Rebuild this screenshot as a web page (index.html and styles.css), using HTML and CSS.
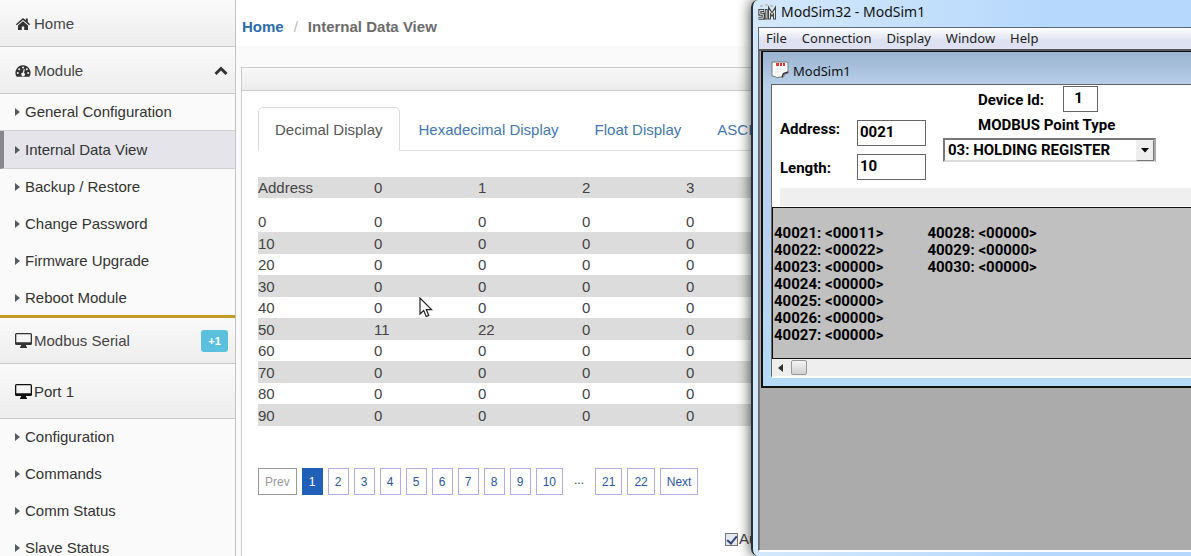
FILE: index.html
```html
<!DOCTYPE html>
<html lang="en">
<head>
<meta charset="utf-8">
<title>Internal Data View</title>
<link rel="stylesheet" href="styles.css">
</head>
<body>
<div class="page">
  <nav class="sidebar">
    <a class="section" href="#">
      <svg class="icon" width="16" height="14" viewBox="0 0 16 14"><path d="M8 1 0.8 7.2l1 1.1L8 3.100l6.200 5.200 1-1.100-2.400-2.100V1.500h-2v1.800z" fill="#333"/><path d="M8 4.200 3 8.400V13h3.800V9.500h2.400V13H13V8.400z" fill="#333"/></svg>
      <span>Home</span>
    </a>
    <a class="section" href="#">
      <svg class="icon" width="16" height="14" viewBox="0 0 16 14"><path d="M8 1.200a7.600 7.600 0 0 0-6.400 11.600h12.800A7.600 7.600 0 0 0 8 1.200z" fill="#333"/><g fill="#f5f5f5"><circle cx="2.800" cy="9" r="1"/><circle cx="4.200" cy="5.200" r="1"/><circle cx="8" cy="3.500" r="1"/><circle cx="11.800" cy="5.200" r="1"/><circle cx="13.200" cy="9" r="1"/><path d="m8.800 5 1 .3-.8 3.600a1.800 1.800 0 1 1-1.200-.2z"/></g></svg>
      <span>Module</span>
      <svg class="chevron" width="14" height="10" viewBox="0 0 14 10"><path d="m1.500 8 5.500-5.500L12.500 8" fill="none" stroke="#333" stroke-width="3"/></svg>
    </a>
    <ul class="links">
      <li class="boxed"><a href="#">General Configuration</a></li>
      <li class="boxed active"><a href="#">Internal Data View</a></li>
      <li><a href="#">Backup / Restore</a></li>
      <li><a href="#">Change Password</a></li>
      <li><a href="#">Firmware Upgrade</a></li>
      <li><a href="#">Reboot Module</a></li>
    </ul>
    <a class="section gold" href="#">
      <svg class="icon" width="17" height="15" viewBox="0 0 17 15"><path d="M1.500 0h14A1.500 1.500 0 0 1 17 1.500v9a1.500 1.500 0 0 1-1.500 1.500H11v1.500h1V15H5v-1.500h1V12H1.500A1.500 1.500 0 0 1 0 10.500v-9A1.500 1.500 0 0 1 1.500 0zM1.300 1.300v7.900h14.400V1.300z" fill="#333" fill-rule="evenodd"/></svg>
      <span>Modbus Serial</span>
      <span class="badge">+1</span>
    </a>
    <a class="section tall" href="#">
      <svg class="icon" width="17" height="15" viewBox="0 0 17 15"><path d="M1.500 0h14A1.500 1.500 0 0 1 17 1.500v9a1.500 1.500 0 0 1-1.500 1.500H11v1.500h1V15H5v-1.500h1V12H1.500A1.500 1.500 0 0 1 0 10.500v-9A1.500 1.500 0 0 1 1.500 0zM1.300 1.300v7.900h14.400V1.300z" fill="#111" fill-rule="evenodd"/></svg>
      <span>Port 1</span>
    </a>
    <ul class="links">
      <li><a href="#">Configuration</a></li>
      <li><a href="#">Commands</a></li>
      <li><a href="#">Comm Status</a></li>
      <li><a href="#">Slave Status</a></li>
    </ul>
  </nav>

  <main class="main">
    <div class="breadcrumb"><a href="#">Home</a><span class="slash">/</span><span>Internal Data View</span></div>
    <section class="panel">
      <div class="panel-head"></div>
      <div class="panel-body">
        <div class="tabs">
          <a class="tab current" href="#">Decimal Display</a>
          <a class="tab" href="#">Hexadecimal Display</a>
          <a class="tab" href="#">Float Display</a>
          <a class="tab" href="#">ASCII</a>
        </div>
        <table class="data">
          <thead><tr><th class="address">Address</th><th>0</th><th>1</th><th>2</th><th>3</th><th class="rest"></th></tr></thead>
          <tbody>
            <tr><td>0</td><td>0</td><td>0</td><td>0</td><td>0</td><td></td></tr>
            <tr><td>10</td><td>0</td><td>0</td><td>0</td><td>0</td><td></td></tr>
            <tr><td>20</td><td>0</td><td>0</td><td>0</td><td>0</td><td></td></tr>
            <tr><td>30</td><td>0</td><td>0</td><td>0</td><td>0</td><td></td></tr>
            <tr><td>40</td><td>0</td><td>0</td><td>0</td><td>0</td><td></td></tr>
            <tr><td>50</td><td>11</td><td>22</td><td>0</td><td>0</td><td></td></tr>
            <tr><td>60</td><td>0</td><td>0</td><td>0</td><td>0</td><td></td></tr>
            <tr><td>70</td><td>0</td><td>0</td><td>0</td><td>0</td><td></td></tr>
            <tr><td>80</td><td>0</td><td>0</td><td>0</td><td>0</td><td></td></tr>
            <tr><td>90</td><td>0</td><td>0</td><td>0</td><td>0</td><td></td></tr>
          </tbody>
        </table>
        <div class="pager">
          <button class="prev" disabled>Prev</button>
          <button class="on">1</button>
          <button>2</button>
          <button>3</button>
          <button>4</button>
          <button>5</button>
          <button>6</button>
          <button>7</button>
          <button>8</button>
          <button>9</button>
          <button>10</button>
          <span class="dots">...</span>
          <button>21</button>
          <button>22</button>
          <button>Next</button>
        </div>
        <div class="refresh">
          <input type="checkbox" id="auto" checked><label for="auto">Auto</label>
        </div>
      </div>
    </section>
  </main>
</div>

<svg class="pointer" width="14" height="21" viewBox="0 0 14 21"><path d="M1 1v16l3.700-3.500 2.500 6 2.600-1.100-2.500-5.800H12.500z" fill="#fff" stroke="#222" stroke-width="1.200"/></svg>

<div class="window">
  <div class="titlebar">
    <svg width="18" height="18" viewBox="0 0 18 18"><path d="M2 3h3M7 2h3M12 3h3" stroke="#c4b4b4" stroke-width="1.500"/><g fill="none" stroke="#444" stroke-width="3"><path d="M6 7.500H1.800v3.700h3.400v4H.5M8.200 6v10.500M11.500 16.500v-9l2.500 4 2.500-4v9"/></g><g fill="none" stroke="#e4e4e4" stroke-width="1"><path d="M5.500 7.500H1.800v3.700h3.400v4H1M8.200 7v8.500M11.500 15.500v-8l2.500 4 2.500-4v8"/></g></svg>
    <span>ModSim32 - ModSim1</span>
  </div>
  <div class="client">
    <div class="menubar">
      <button>File</button><button>Connection</button><button>Display</button><button>Window</button><button>Help</button>
    </div>
    <div class="workspace">
      <div class="child">
        <div class="child-title">
          <svg width="18" height="18" viewBox="0 0 18 18"><path d="M1 1h16v11l-3 1-2 3.500-3-.5-3 1-2-1.500L1 15z" fill="#fff" stroke="#777"/><path d="m17 11-4.500 1.500L11 16" fill="none" stroke="#333" stroke-width="1.500"/><path d="M5 3.500h3M9 3.500h2M12 3.500h2" stroke="#e33" stroke-width="3"/><path d="M4 8h9M4 11h6" stroke="#ddd"/></svg>
          <span>ModSim1</span>
        </div>
        <div class="child-body">
          <div class="form">
            <div class="range">
              <label for="addr">Address:</label><input id="addr" type="text" value="0021">
              <label for="len">Length:</label><input id="len" type="text" value="10">
            </div>
            <div class="point">
              <div class="device"><label for="dev">Device Id:</label><input id="dev" type="text" value="1"></div>
              <label class="point-label" for="type">MODBUS Point Type</label>
              <div class="combo">
                <select id="type"><option>03: HOLDING REGISTER</option></select>
                <span class="drop"><svg width="8" height="5" viewBox="0 0 8 5"><path d="M0 0h8L4 4.500z" fill="#000"/></svg></span>
              </div>
            </div>
          </div>
          <div class="strip"></div>
          <div class="registers">
            <div class="column">
              <span>40021: &lt;00011&gt;</span>
              <span>40022: &lt;00022&gt;</span>
              <span>40023: &lt;00000&gt;</span>
              <span>40024: &lt;00000&gt;</span>
              <span>40025: &lt;00000&gt;</span>
              <span>40026: &lt;00000&gt;</span>
              <span>40027: &lt;00000&gt;</span>
            </div>
            <div class="column">
              <span>40028: &lt;00000&gt;</span>
              <span>40029: &lt;00000&gt;</span>
              <span>40030: &lt;00000&gt;</span>
            </div>
          </div>
          <div class="scroll">
            <svg width="5" height="8" viewBox="0 0 5 8"><path d="M5 0v8L0 4z" fill="#333"/></svg>
            <span class="thumb"></span>
          </div>
        </div>
      </div>
    </div>
  </div>
</div>
</body>
</html>
```
FILE: styles.css
```css
* { box-sizing: border-box; }

body {
  margin: 0;
  height: 100vh;
  overflow: hidden;
  position: relative;
  font: 15px/20px "Liberation Sans", Arial, sans-serif;
  color: #444;
  background: #fafafa;
}

a { text-decoration: none; color: inherit; }

.page { display: flex; height: 100vh; overflow: hidden; }

/* Sidebar */
.sidebar {
  flex: none;
  width: 236px;
  border-right: 1px solid #c4c4c8;
  background: #fafafa;
  overflow: hidden;
}

.section {
  display: flex;
  align-items: center;
  gap: 3px;
  height: 47px;
  padding: 1px 7px 0 15px;
  border-bottom: 1px solid #c8c8c8;
  background: linear-gradient(#fafafa, #ededee);
}
.section .icon { flex: none; width: 16px; }
.section.gold { height: 49px; padding-top: 0; border-top: 3px solid #c49a27; }
.section.gold .icon, .section.tall .icon { width: 17px; }
.section.gold, .section.tall { gap: 2px; }
.section.tall { height: 55px; color: #333; }
.chevron { margin-left: auto; }

.badge {
  margin-left: auto;
  width: 27px;
  border-radius: 3px;
  background: #5bc0de;
  color: #fff;
  font-size: 11px;
  font-weight: bold;
  line-height: 22px;
  text-align: center;
}

.links { display: flex; flex-direction: column; margin: 0; padding: 0; list-style: none; color: #333; }
.links li { height: 37px; }
.links li:last-child { height: 35px; }
.links .boxed { border-bottom: 1px solid #d0d0d4; }
.links .active { height: 38px; background: #e4e4ea; border-left: 4px solid #88888c; }
.links a { display: flex; align-items: center; gap: 5px; height: 36px; padding-left: 15px; }
.links .active a { height: 37px; padding-left: 11px; }
.links a::before {
  content: "";
  border: 4px solid transparent;
  border-left: 5px solid #555c60;
  border-right: 0;
}

/* Content */
.main { flex: 1; min-width: 0; display: flex; flex-direction: column; }

.breadcrumb {
  flex: none;
  display: flex;
  gap: 10px;
  height: 46px;
  margin-bottom: 21px;
  padding: 17px 6px 0;
  background: #fff;
  font-weight: bold;
  color: #6c6c6c;
}
.breadcrumb a { color: #2b6cb0; }
.slash { color: #bbb; font-weight: normal; }

.panel {
  flex: 1;
  margin-left: 5px;
  border: 1px solid #ccc;
  background: #fff;
}
.panel-head { height: 23px; border-bottom: 1px solid #ccc; background: linear-gradient(#f8f8f8, #ececec); }
.panel-body { padding: 16px; }

.tabs { display: flex; gap: 2px; height: 44px; border-bottom: 1px solid #ddd; white-space: nowrap; }
.tab { height: 44px; padding: 12px 16px; border: 1px solid transparent; color: #3f78b4; }
.tab.current { border-color: #ddd; border-bottom-color: #fff; border-radius: 5px 5px 0 0; background: #fff; color: #555; }

.data { width: 100%; margin-top: 26px; border-collapse: collapse; table-layout: fixed; }
.data th, .data td { height: 21px; padding: 0; line-height: 21px; font-weight: normal; text-align: left; }
.data th { width: 104px; background: #dcdcdc; }
.data .address { width: 116px; }
.data .rest { width: auto; }
.data tbody::before { content: ""; display: block; height: 13px; }
.data tbody tr:nth-child(even) td { height: 22px; background: #dcdcdc; }

.pager { display: flex; gap: 5px; margin-top: 42px; font-size: 12px; }
.pager button {
  min-width: 21px;
  height: 27px;
  padding: 0 6px;
  border: 1px solid #b4aaf0;
  background: #fff;
  color: #2a58a0;
  font: inherit;
}
.pager .prev { border-color: #999; color: #999; }
.pager .on { border-color: #2060b8; background: #2060b8; color: #fff; }
.dots { width: 22px; line-height: 24px; text-align: center; }

.refresh { display: flex; align-items: center; margin: 34px 0 0 467px; white-space: nowrap; }
.refresh input {
  appearance: none;
  width: 13px;
  height: 13px;
  margin: 0 1px 0 0;
  border: 1px solid #777;
  background: #e4e8f0;
}
.refresh input:checked::before {
  content: "";
  display: block;
  width: 4px;
  height: 8px;
  margin: 0 auto;
  border: solid #34497c;
  border-width: 0 2px 2px 0;
  transform: rotate(40deg);
}

.pointer { position: absolute; left: 419px; top: 297px; }

/* Overlapping simulator window */
.window {
  position: absolute;
  inset: 0 0 0 751px;
  display: flex;
  flex-direction: column;
  padding: 0 0 4px 5px;
  border-left: 2px solid #29323c;
  border-radius: 7px 0 0 7px;
  background: linear-gradient(90deg, #d4e8fb, #b6d8fc 300px);
  box-shadow: 0 0 14px rgba(0, 0, 0, .75);
  color: #111;
  font: 13px/20px "Noto Sans", "Open Sans", sans-serif;
}
.titlebar {
  display: flex;
  gap: 5px;
  height: 27px;
  padding-top: 3px;
  font-size: 14px;
  line-height: 18px;
}
.client {
  flex: 1;
  display: flex;
  flex-direction: column;
  border: 1px solid #5d6874;
  border-width: 1px 0 0 1px;
  border-bottom: 2px solid #fff;
}
.menubar {
  display: flex;
  gap: 15px;
  height: 23px;
  padding: 0 0 2px 7px;
  border-bottom: 2px solid #55585e;
  background: linear-gradient(#fff, #dde1f0 60%, #dfe0f2);
}
.menubar button { padding: 0; border: 0; background: none; color: #222; font: inherit; }
.workspace { flex: 1; padding-left: 1px; border-left: 1px solid #777; background: #ababab; }

.child {
  padding: 0 0 8px 8px;
  border: solid #111;
  border-width: 1px 0 2px 2px;
  background: linear-gradient(#9ab3d0, #b9d0ea 34px, #b9d1ee 60%, #b4dcf4);
}
.child-title { display: flex; gap: 4px; height: 32px; padding: 9px 0 0; line-height: 20px; }
.child-body {
  border-left: 1px solid #666;
  border-top: 1px solid #666;
  border-bottom: 2px solid #fff;
  background: #fff;
  font: bold 15px/18px Roboto, "Liberation Sans", sans-serif;
  color: #000;
}
.form { display: flex; gap: 17px; height: 103px; padding-left: 8px; }
.range { display: grid; grid-template-columns: 77px 69px; row-gap: 8px; align-content: start; padding-top: 35px; }
.range label + input + label { padding-top: 5px; }
.child-body input {
  width: 100%;
  height: 26px;
  padding: 0 2px 3px;
  border: 1px solid #666;
  background: #fff;
  color: inherit;
  font: inherit;
}
.device { display: flex; gap: 15px; padding-left: 35px; }
.device label { width: 70px; padding-top: 5px; white-space: nowrap; }
.child-body .device input { width: 35px; padding-right: 6px; text-align: center; }
.point { padding-top: 1px; }
.point-label { display: block; padding: 4px 0 4px 35px; }
.combo { position: relative; width: 213px; }
.combo select {
  appearance: none;
  width: 100%;
  height: 24px;
  padding: 0 3px;
  border: 2px solid #777;
  border-right-color: #aaa;
  border-bottom-color: #ddd;
  border-radius: 0;
  background: #fff;
  color: inherit;
  font: inherit;
}
.drop {
  position: absolute;
  inset: 2px 2px 1px auto;
  display: grid;
  place-items: center;
  width: 18px;
  border: 1px solid;
  border-color: #eee #777 #777 #eee;
  background: #eee;
}
.strip { height: 18px; margin: 0 0 1px 8px; background: #efefef; }
.registers {
  display: flex;
  gap: 44px;
  height: 152px;
  padding: 17px 0 0 1px;
  border: 1px solid #111;
  border-right: 0;
  background: #c0c0c0;
  line-height: 17px;
}
.column { display: flex; flex-direction: column; }
.scroll { display: flex; align-items: center; gap: 8px; height: 17px; padding-left: 6px; background: #eee; }
.thumb { width: 16px; height: 15px; border: 1px solid #999; border-radius: 2px; background: linear-gradient(#f4f4f4, #d0d0d0); }
```
